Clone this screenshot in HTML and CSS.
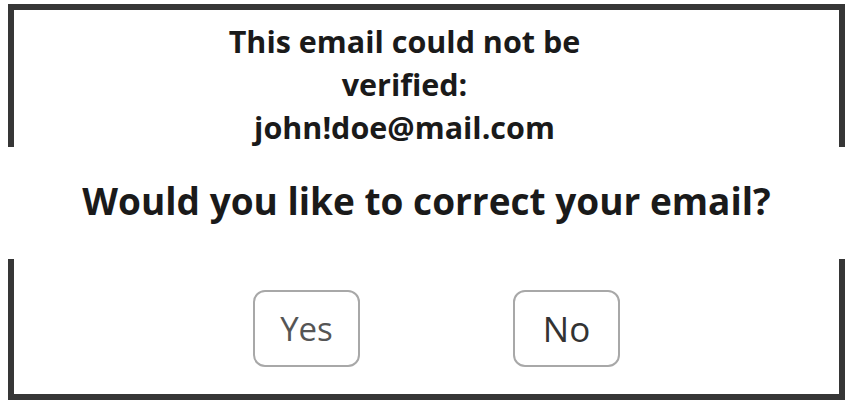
FILE: index.html
```html
<!DOCTYPE html>
<html lang="en">
<head>
  <meta charset="UTF-8" />
  <meta name="viewport" content="width=device-width, initial-scale=1.0"/>
  <title>Verify email</title>
  <link rel="stylesheet" href="styles.css">
</head>
<body>

  <div class="dialog">
    <div class="panel panel-top">
      <p class="message">
        This email could not be<br>
        verified:<br>
        john!doe@mail.com
      </p>
    </div>

    <h2 class="question">Would you like to correct your email?</h2>

    <div class="panel panel-bottom">
      <div class="actions">
        <button class="btn btn-yes">Yes</button>
        <button class="btn btn-no">No</button>
      </div>
    </div>
  </div>

</body>
</html>
```

FILE: styles.css
```css
* {
  box-sizing: border-box;
}
body {
  margin: 0;
  background: #fff;
  color: #1a1a1a;
  font-family: 'Open Sans', 'Noto Sans', sans-serif;
}
.dialog {
  margin: 4px 5px 7px 8px;
  display: flex;
  flex-direction: column;
}
.panel {
  border: 6px solid #363636;
}
.panel-top {
  height: 143px;
  border-bottom: none;
  padding: 10px 44px 0 0;
}
.panel-bottom {
  height: 141px;
  border-top: none;
  padding-top: 31px;
}
.message {
  margin: 0;
  text-align: center;
  font-size: 30.5px;
  font-weight: 700;
  line-height: 43px;
}
.question {
  margin: 0;
  height: 112px;
  padding-top: 29px;
  text-align: center;
  font-size: 37px;
  font-weight: 700;
  line-height: 50px;
}
.actions {
  display: flex;
  justify-content: center;
  gap: 153px;
  padding-left: 20px;
}
.btn {
  width: 107px;
  height: 77px;
  background: #fff;
  border: 2px solid #a8a8a8;
  border-radius: 12px;
  font-family: 'Open Sans', 'Noto Sans', sans-serif;
  font-size: 33px;
  padding: 0;
}
.btn-yes {
  color: #555;
}
.btn-no {
  color: #333;
  font-size: 35px;
}
```
